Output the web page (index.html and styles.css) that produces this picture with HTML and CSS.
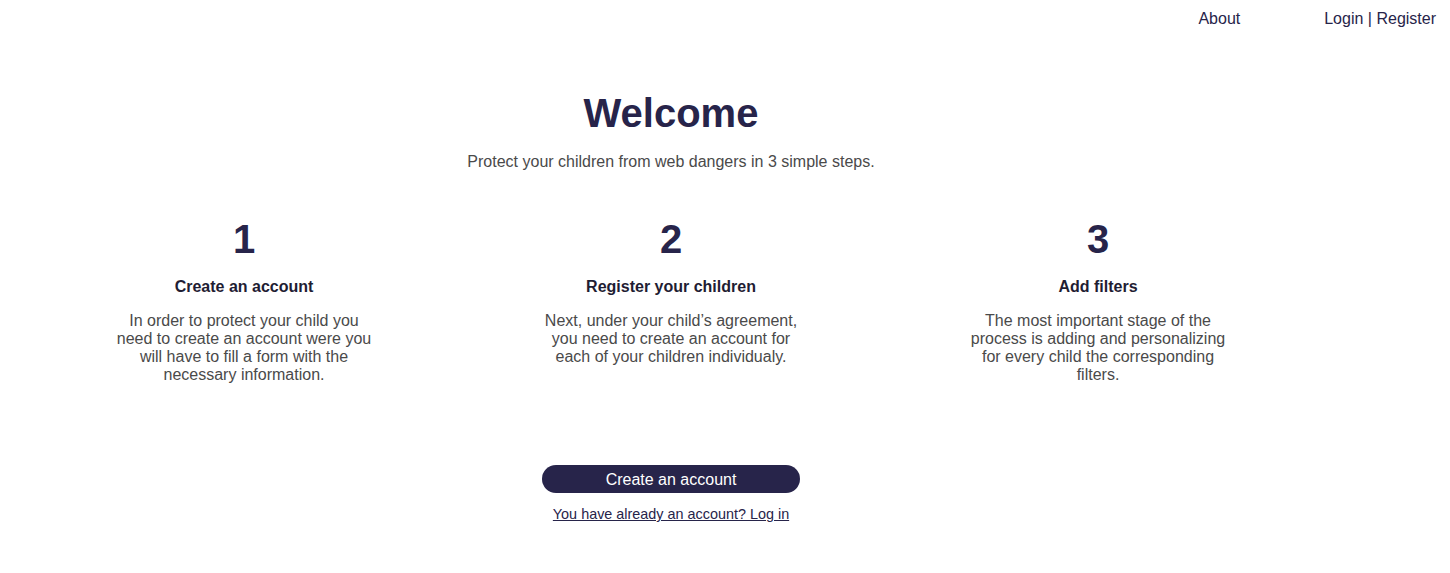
FILE: index.html
```html
<!DOCTYPE html>
<html lang="en">
<head>
<meta charset="utf-8">
<title>Welcome</title>
<link rel="stylesheet" href="styles.css">
</head>
<body>
<header class="topbar">
  <a class="nav-link" href="#">About</a>
  <div class="auth"><a class="nav-link" href="#">Login</a> | <a class="nav-link" href="#">Register</a></div>
</header>
<main class="main">
  <h1 class="title">Welcome</h1>
  <p class="subtitle">Protect your children from web dangers in 3 simple steps.</p>
  <section class="steps">
    <div class="step">
      <div class="step-num">1</div>
      <h2 class="step-title">Create an account</h2>
      <p class="step-desc">In order to protect your child you need to create an account were you will have to fill a form with the necessary information.</p>
    </div>
    <div class="step">
      <div class="step-num">2</div>
      <h2 class="step-title">Register your children</h2>
      <p class="step-desc">Next, under your child’s agreement, you need to create an account for each of your children individualy.</p>
    </div>
    <div class="step">
      <div class="step-num">3</div>
      <h2 class="step-title">Add filters</h2>
      <p class="step-desc">The most important stage of the process is adding and personalizing for every child the corresponding filters.</p>
    </div>
  </section>
  <div class="actions">
    <a class="btn" href="#">Create an account</a>
    <a class="login-link" href="#">You have already an account? Log in</a>
  </div>
</main>
</body>
</html>
```
FILE: styles.css
```css
* { box-sizing: border-box; }
html, body { margin: 0; padding: 0; background: #fff; }
body {
  font-family: "Liberation Sans", Arial, sans-serif;
  color: #27244a;
  width: 1450px;
  height: 573px;
  overflow: hidden;
}
.topbar {
  display: flex;
  justify-content: flex-end;
  align-items: center;
  gap: 84px;
  height: 37px;
  padding-top: 1px;
  padding-right: 14px;
  font-size: 16px;
  line-height: 36px;
}
.nav-link { color: #27244a; text-decoration: none; }
.auth { color: #27244a; }
.main {
  width: 1342px;
  display: flex;
  flex-direction: column;
  align-items: center;
}
.title {
  margin: 53px 0 0;
  font-size: 40px;
  line-height: 46px;
  font-weight: bold;
  color: #27244a;
}
.subtitle {
  margin: 17px 0 0;
  font-size: 16px;
  line-height: 18px;
  color: #4a4a4a;
}
.steps {
  margin-top: 45px;
  display: grid;
  grid-template-columns: repeat(3, 427px);
  justify-content: center;
}
.step {
  display: flex;
  flex-direction: column;
  align-items: center;
  text-align: center;
}
.step-num {
  font-size: 40px;
  line-height: 46px;
  font-weight: bold;
  color: #27244a;
}
.step-title {
  margin: 16px 0 0;
  font-size: 16px;
  line-height: 18px;
  font-weight: bold;
  color: #1f1d33;
}
.step-desc {
  margin: 16px 0 0;
  width: 262px;
  font-size: 16px;
  line-height: 18px;
  color: #4a4a4a;
}
.actions {
  margin-top: 81px;
  display: flex;
  flex-direction: column;
  align-items: center;
}
.btn {
  display: flex;
  align-items: center;
  justify-content: center;
  width: 258px;
  height: 28px;
  padding-top: 1px;
  border-radius: 14px;
  background: #27244a;
  color: #fff;
  font-size: 16px;
  text-decoration: none;
}
.login-link {
  margin-top: 13px;
  font-size: 14.4px;
  line-height: 16px;
  color: #27244a;
  text-decoration: underline;
}
```
